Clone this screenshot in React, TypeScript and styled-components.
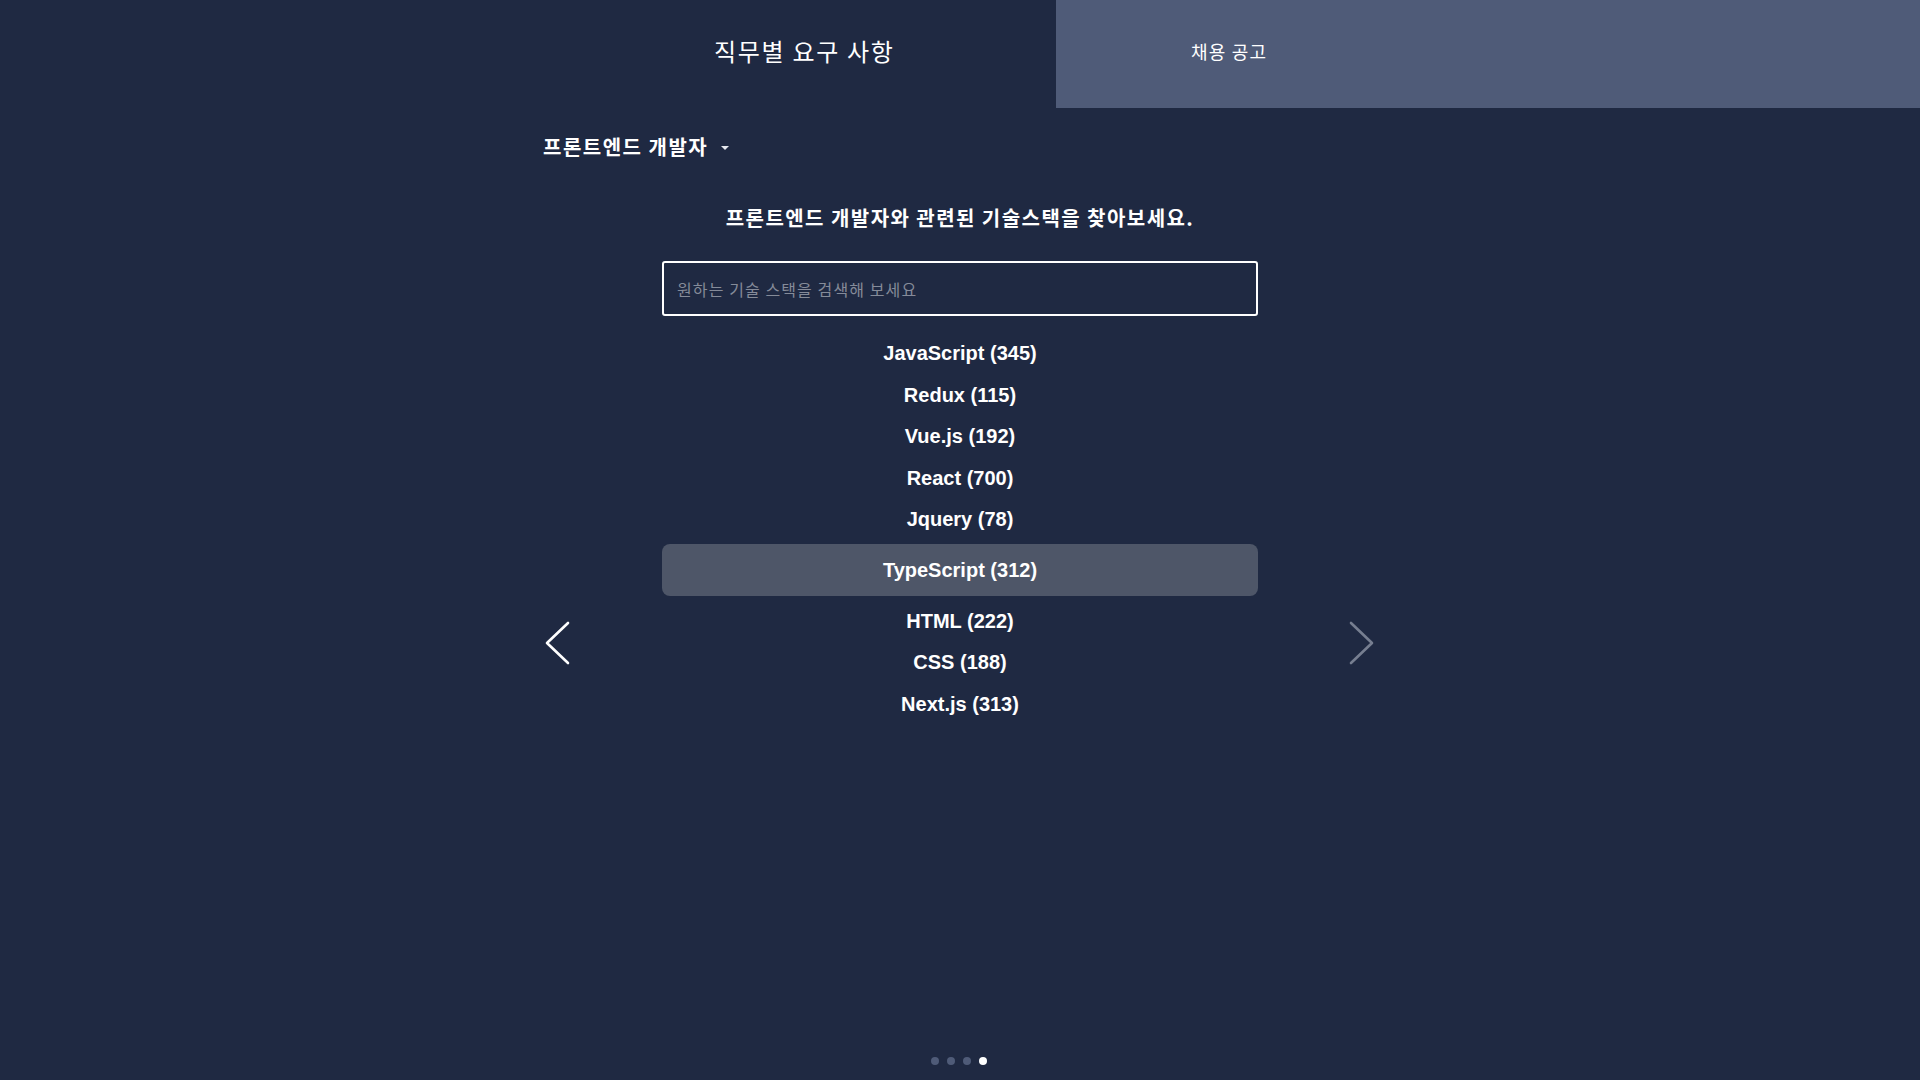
import React from 'react';
import styled, { createGlobalStyle } from 'styled-components';

const GlobalStyle = createGlobalStyle`
  html, body { margin: 0; padding: 0; background: #1f2942; }
  body {
    font-family: "Liberation Sans", "Noto Sans CJK KR", sans-serif;
    color: #ffffff;
  }
  * { box-sizing: border-box; }
`;

const Page = styled.div`
  min-height: 100vh;
  display: flex;
  flex-direction: column;
`;

const Header = styled.header`
  display: grid;
  grid-template-columns: 1056px 1fr;
  height: 108px;
`;

const Tab = styled.button<{ $active?: boolean; $offset: number; $size: number; $spacing: number; $lift: number }>`
  display: flex;
  align-items: center;
  margin: 0;
  border: 0;
  padding: 0 0 ${(p) => p.$lift}px ${(p) => p.$offset}px;
  background: ${(p) => (p.$active ? 'transparent' : '#4f5b78')};
  color: #ffffff;
  font-family: "Noto Sans CJK KR", sans-serif;
  font-size: ${(p) => p.$size}px;
  letter-spacing: ${(p) => p.$spacing}px;
  font-weight: 400;
  cursor: pointer;
`;

const Carousel = styled.main`
  position: relative;
  width: 840px;
  margin: 0 auto;
  display: flex;
  flex-direction: column;
`;

const RoleSelect = styled.button`
  display: flex;
  align-items: center;
  gap: 13px;
  align-self: flex-start;
  margin: 25px 0 0 0;
  padding: 0 0 0 3px;
  border: 0;
  background: transparent;
  color: #ffffff;
  font-family: "Noto Sans CJK KR", sans-serif;
  font-size: 20px;
  font-weight: 700;
  letter-spacing: 1.5px;
  line-height: 28px;
  height: 28px;
  cursor: pointer;
`;

const Caret = styled.span`
  width: 0;
  height: 0;
  border-left: 4.5px solid transparent;
  border-right: 4.5px solid transparent;
  border-top: 4.5px solid #e6e8ee;
  margin-top: 2px;
`;

const Column = styled.div`
  width: 596px;
  align-self: center;
  display: flex;
  flex-direction: column;
`;

const Heading = styled.h2`
  margin: 43px 0 0 0;
  text-align: center;
  font-family: "Noto Sans CJK KR", sans-serif;
  font-size: 20px;
  font-weight: 700;
  letter-spacing: 1.45px;
  line-height: 28px;
  height: 28px;
`;

const Search = styled.input`
  margin-top: 29px;
  width: 100%;
  height: 55px;
  border: 2px solid #ffffff;
  border-radius: 3px;
  background: transparent;
  padding: 0 13px;
  color: #ffffff;
  font-family: "Noto Sans CJK KR", sans-serif;
  font-size: 16px;
  letter-spacing: 1.1px;
  outline: none;
  &::placeholder { color: #858b99; }
`;

const List = styled.ul`
  list-style: none;
  margin: 17px 0 0 0;
  padding: 0;
  display: flex;
  flex-direction: column;
`;

const Item = styled.li<{ $selected?: boolean }>`
  display: flex;
  align-items: center;
  justify-content: center;
  height: ${(p) => (p.$selected ? '52px' : '41.5px')};
  margin: ${(p) => (p.$selected ? '3.5px 0 4.5px 0' : '0')};
  border-radius: 8px;
  background: ${(p) => (p.$selected ? '#4e5668' : 'transparent')};
  font-family: "Liberation Sans", Arial, sans-serif;
  font-size: 20px;
  font-weight: 700;
  cursor: pointer;
`;

const Arrow = styled.button<{ $side: 'left' | 'right'; $dim?: boolean }>`
  position: absolute;
  top: 513px;
  ${(p) => (p.$side === 'left' ? 'left: 4px;' : 'right: 5px;')}
  width: 26px;
  height: 44px;
  padding: 0;
  border: 0;
  background: transparent;
  color: ${(p) => (p.$dim ? '#767e90' : '#ffffff')};
  cursor: pointer;
  svg { display: block; }
`;

const Dots = styled.div`
  margin-top: auto;
  display: flex;
  justify-content: center;
  gap: 8px;
  padding: 0 0 15px 0;
  transform: translateX(-1px);
`;

const Dot = styled.span<{ $active?: boolean }>`
  width: 8px;
  height: 8px;
  border-radius: 50%;
  background: ${(p) => (p.$active ? '#ffffff' : '#4f5b78')};
`;

const stacks = [
  { name: 'JavaScript', count: 345 },
  { name: 'Redux', count: 115 },
  { name: 'Vue.js', count: 192 },
  { name: 'React', count: 700 },
  { name: 'Jquery', count: 78 },
  { name: 'TypeScript', count: 312, selected: true },
  { name: 'HTML', count: 222 },
  { name: 'CSS', count: 188 },
  { name: 'Next.js', count: 313 },
];

export default function App() {
  return (
    <Page>
      <GlobalStyle />
      <Header>
        <Tab $active $offset={714} $size={24} $spacing={1.7} $lift={8}>직무별 요구 사항</Tab>
        <Tab $offset={135} $size={18} $spacing={1.2} $lift={6}>채용 공고</Tab>
      </Header>
      <Carousel>
        <RoleSelect>
          프론트엔드 개발자
          <Caret />
        </RoleSelect>
        <Column>
          <Heading>프론트엔드 개발자와 관련된 기술스택을 찾아보세요.</Heading>
          <Search placeholder="원하는 기술 스택을 검색해 보세요" />
          <List>
            {stacks.map((s) => (
              <Item key={s.name} $selected={s.selected}>
                {s.name} ({s.count})
              </Item>
            ))}
          </List>
        </Column>
        <Arrow $side="left" aria-label="이전">
          <svg width="26" height="44" viewBox="0 0 26 44" fill="none">
            <polyline points="24,2 3,22 24,42" stroke="currentColor" strokeWidth="2.6" strokeLinecap="round" strokeLinejoin="round" />
          </svg>
        </Arrow>
        <Arrow $side="right" $dim aria-label="다음">
          <svg width="26" height="44" viewBox="0 0 26 44" fill="none">
            <polyline points="2,2 23,22 2,42" stroke="currentColor" strokeWidth="2.6" strokeLinecap="round" strokeLinejoin="round" />
          </svg>
        </Arrow>
      </Carousel>
      <Dots>
        <Dot />
        <Dot />
        <Dot />
        <Dot $active />
      </Dots>
    </Page>
  );
}
